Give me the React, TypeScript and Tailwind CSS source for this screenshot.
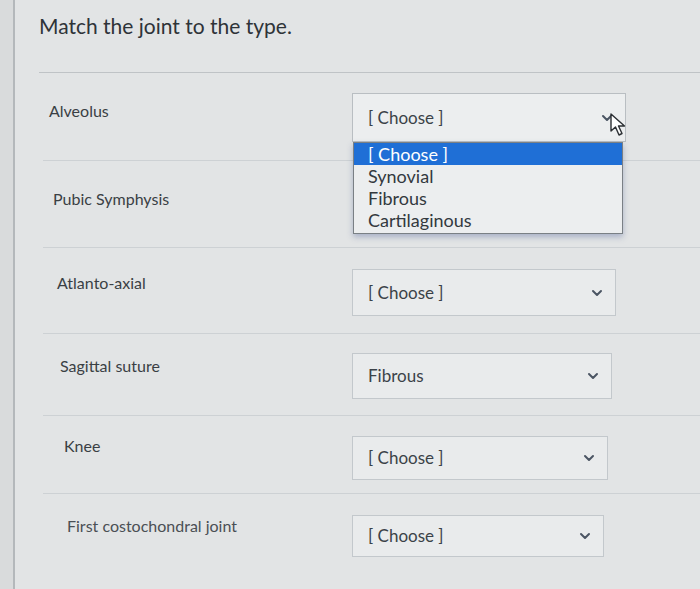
import React from "react";

const font = { fontFamily: "Lato, 'Open Sans', sans-serif" };

function Chevron() {
  return (
    <svg width="12" height="8" viewBox="0 0 12 8" className="shrink-0">
      <path d="M2 2 L6 6 L10 2" fill="none" stroke="#4b5563" strokeWidth="2" strokeLinecap="round" strokeLinejoin="round" />
    </svg>
  );
}

function Select({ value, w, h, hidden }: { value: string; w: string; h: string; hidden?: boolean }) {
  return (
    <div className={`flex items-center justify-between border border-[#c3c8cc] bg-[#e9ebec] pl-[15px] pr-[12px] text-[17px] text-[#3b4248] ${w} ${h} ${hidden ? "invisible" : ""}`}>
      <span>{value}</span>
      <Chevron />
    </div>
  );
}

export default function App() {
  return (
    <div className="relative flex h-[589px] w-[700px] overflow-hidden bg-[#e2e4e5]" style={font}>
      <div className="w-[15px] shrink-0 border-r-2 border-[#b4b8bb] bg-[#d9dbdc]" />
      <div className="flex flex-1 flex-col">
        <div className="h-[72px] shrink-0 pl-[24px] pt-[10px] text-[21px] text-[#2e3338]">Match the joint to the type.</div>
        <div className="ml-[24px] border-t border-[#bfc3c6]" />
        {/* Row 1 */}
        <div className="ml-[28px] flex h-[88px] shrink-0 border-b border-[#cdd1d4] pl-[6px]">
          <div className="w-[303px] shrink-0 pt-[26px] text-[16px] text-[#3a3f44]">Alveolus</div>
          <div className="pt-[20px]">
            <div className="flex h-[49px] w-[274px] items-center justify-between border border-[#b9bec2] bg-[#eceeef] pl-[15px] pr-[12px] text-[17px] text-[#3b4248]">
              <span>[ Choose ]</span>
              <Chevron />
            </div>
          </div>
        </div>
        {/* Row 2 */}
        <div className="ml-[28px] flex h-[87px] shrink-0 border-b border-[#cdd1d4] pl-[10px]">
          <div className="w-[299px] shrink-0 pt-[26px] text-[16px] text-[#3a3f44]">Pubic Symphysis</div>
          <div className="pt-[22px]">
            <Select value="[ Choose ]" w="w-[266px]" h="h-[48px]" hidden />
          </div>
        </div>
        {/* Row 3 */}
        <div className="ml-[28px] flex h-[86px] shrink-0 border-b border-[#cdd1d4] pl-[14px]">
          <div className="w-[295px] shrink-0 pt-[23px] text-[16px] text-[#3a3f44]">Atlanto-axial</div>
          <div className="pt-[21px]">
            <Select value="[ Choose ]" w="w-[264px]" h="h-[47px]" />
          </div>
        </div>
        {/* Row 4 */}
        <div className="ml-[28px] flex h-[82px] shrink-0 border-b border-[#cdd1d4] pl-[17px]">
          <div className="w-[292px] shrink-0 pt-[20px] text-[16px] text-[#3a3f44]">Sagittal suture</div>
          <div className="pt-[19px]">
            <Select value="Fibrous" w="w-[260px]" h="h-[46px]" />
          </div>
        </div>
        {/* Row 5 */}
        <div className="ml-[28px] flex h-[78px] shrink-0 border-b border-[#cdd1d4] pl-[21px]">
          <div className="w-[288px] shrink-0 pt-[18px] text-[16px] text-[#3a3f44]">Knee</div>
          <div className="pt-[20px]">
            <Select value="[ Choose ]" w="w-[256px]" h="h-[44px]" />
          </div>
        </div>
        {/* Row 6 */}
        <div className="ml-[28px] flex flex-1 pl-[24px]">
          <div className="w-[285px] shrink-0 pt-[20px] text-[16px] text-[#4a4f54]">First costochondral joint</div>
          <div className="pt-[21px]">
            <Select value="[ Choose ]" w="w-[252px]" h="h-[42px]" />
          </div>
        </div>
      </div>

      {/* Open dropdown list */}
      <div className="absolute left-[353px] top-[142px] w-[270px] border border-[#7a8085] bg-[#eceeef] pb-[2px] text-[18px] leading-[22px] text-[#33393e] shadow-[0_3px_6px_rgba(60,80,140,0.35)]">
        <div className="bg-[#1f6fd6] pl-[14px] text-white">[ Choose ]</div>
        <div className="pl-[14px]">Synovial</div>
        <div className="pl-[14px]">Fibrous</div>
        <div className="pl-[14px]">Cartilaginous</div>
      </div>

      {/* Mouse pointer */}
      <svg className="absolute left-[608px] top-[112px]" width="22" height="26" viewBox="0 0 22 26">
        <path d="M3 2 L3 19 L7.5 15 L11 23 L14 21.5 L10.5 14 L16.5 14 Z" fill="#ffffff" stroke="#2b2f33" strokeWidth="1.4" strokeLinejoin="round" />
      </svg>
    </div>
  );
}
